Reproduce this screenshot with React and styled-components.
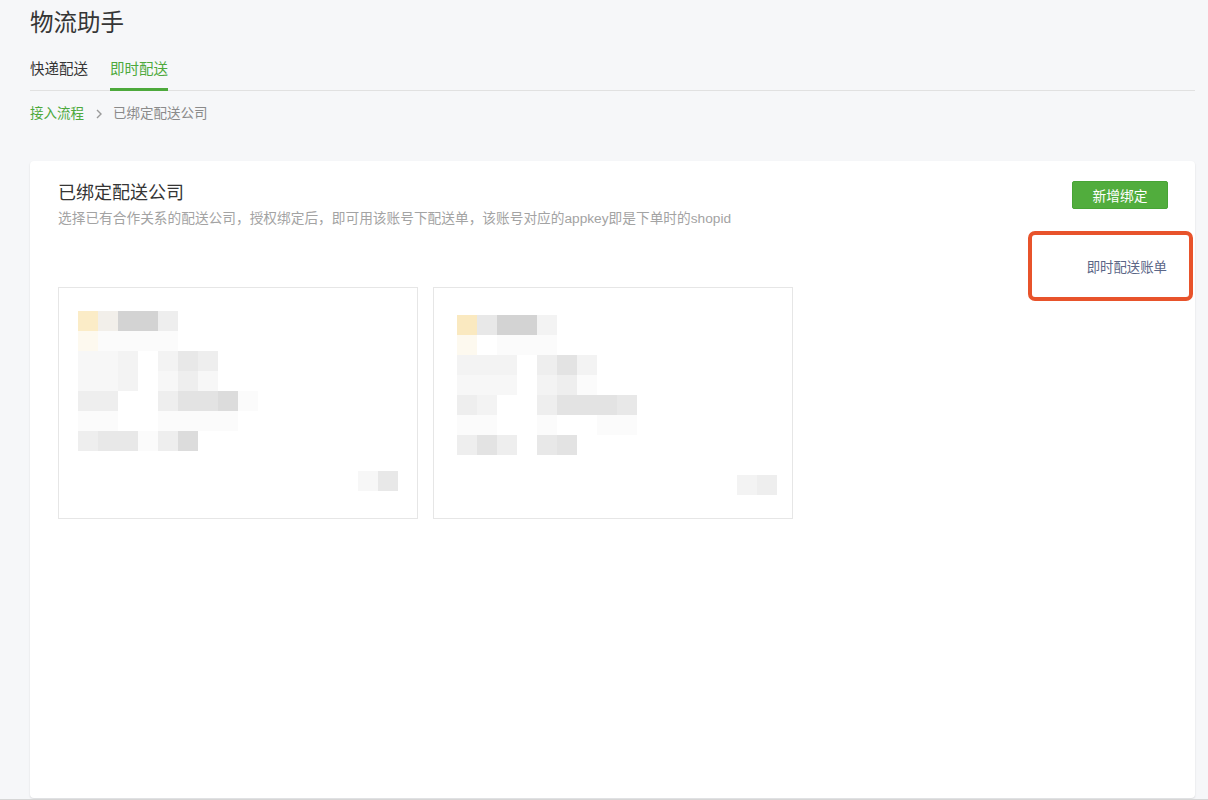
import React from "react";
import styled, { createGlobalStyle } from "styled-components";

const GlobalStyle = createGlobalStyle`
  html, body {
    margin: 0;
    padding: 0;
    background: #f6f7f9;
    font-family: "Liberation Sans", "Noto Sans CJK SC", sans-serif;
    color: #353535;
  }
`;

// mosaic palette for the blurred card contents
const palette = {
  y: "#fbecc7",
  Y: "#fae9c0",
  w: "#fdf9ef",
  a: "#f2efea",
  D: "#d3d3d3",
  d: "#dcdcdc",
  c: "#e3e3e3",
  b: "#e8e8e8",
  e: "#eeeeee",
  f: "#f3f3f3",
  g: "#f7f7f7",
  h: "#fbfbfb",
};

const cards = [
  {
    id: 1,
    top: 23,
    left: 19,
    rows: [
      "yaDDe",
      "whhhh",
      "ggf.fbe",
      "ggf.geg",
      "ee..eccdh",
      "hh..hhhh",
      "ebbhed",
      "",
      "..............gb",
    ],
  },
  {
    id: 2,
    top: 27,
    left: 23,
    rows: [
      "YbDDf",
      "w.hhh",
      "fff.ecf",
      "ggg.feh",
      "ef..ecccb",
      "hh..h..hh",
      "ece.bc",
      "",
      "..............fe",
    ],
  },
];

const App = () => {
  return (
    <>
      <GlobalStyle />
      <Page>
        <PageTitle>物流助手</PageTitle>
        <Tabs>
          <Tab>快递配送</Tab>
          <Tab active>即时配送</Tab>
        </Tabs>
        <Breadcrumb>
          <Crumb link>接入流程</Crumb>
          <Chevron viewBox="0 0 8 12">
            <path d="M2 2l4 4-4 4" fill="none" stroke="#9a9a9a" strokeWidth="1.4" />
          </Chevron>
          <Crumb>已绑定配送公司</Crumb>
        </Breadcrumb>

        <Panel>
          <PanelHeader>
            <div>
              <PanelTitle>已绑定配送公司</PanelTitle>
              <PanelDesc>
                选择已有合作关系的配送公司，授权绑定后，即可用该账号下配送单，该账号对应的appkey即是下单时的shopid
              </PanelDesc>
            </div>
            <PrimaryButton>新增绑定</PrimaryButton>
          </PanelHeader>

          <LinkRow>
            <BillLink>即时配送账单</BillLink>
          </LinkRow>

          <CardRow>
            {cards.map((card) => (
              <Card key={card.id}>
                <Mosaic top={card.top} left={card.left}>
                  {card.rows.map((row, r) => (
                    <MosaicRow key={r}>
                      {row.split("").map((ch, i) => (
                        <Cell key={i} color={palette[ch] || "transparent"} />
                      ))}
                    </MosaicRow>
                  ))}
                </Mosaic>
              </Card>
            ))}
          </CardRow>
        </Panel>
        <BottomLine />
      </Page>
    </>
  );
};

const Page = styled.div`
  padding: 0 13px 0 30px;
  height: 800px;
  box-sizing: border-box;
  display: flex;
  flex-direction: column;
  position: relative;
  overflow: hidden;
`;

const PageTitle = styled.h1`
  margin: 7px 0 0;
  font-size: 23.5px;
  line-height: 32px;
  font-weight: normal;
  color: #353535;
`;

const Tabs = styled.div`
  display: flex;
  gap: 22px;
  margin-top: 13px;
  border-bottom: 1px solid #e1e1e1;
`;

const Tab = styled.div`
  font-size: 14.5px;
  line-height: 22px;
  padding: 6px 0 8px;
  margin-bottom: -1px;
  color: ${(p) => (p.active ? "#4da93c" : "#353535")};
  border-bottom: 3px solid ${(p) => (p.active ? "#4da93c" : "transparent")};
`;

const Breadcrumb = styled.div`
  display: flex;
  align-items: center;
  gap: 9px;
  margin-top: 13px;
  font-size: 13.5px;
  line-height: 20px;
`;

const Crumb = styled.span`
  color: ${(p) => (p.link ? "#4da93c" : "#8a8a8a")};
`;

const Chevron = styled.svg`
  width: 8px;
  height: 12px;
  margin: 0 1px 0 2px;
`;

const Panel = styled.div`
  margin-top: 37px;
  height: 637px;
  box-sizing: border-box;
  background: #ffffff;
  border-radius: 4px;
  box-shadow: 0 1px 2px rgba(0, 0, 0, 0.12);
  padding: 19px 27px 0 28px;
`;

const PanelHeader = styled.div`
  display: flex;
  justify-content: space-between;
  align-items: flex-start;
`;

const PanelTitle = styled.h2`
  margin: 0;
  font-size: 18px;
  line-height: 26px;
  font-weight: normal;
  color: #353535;
`;

const PanelDesc = styled.p`
  margin: 3px 0 0;
  font-size: 13.7px;
  line-height: 20px;
  color: #a3a3a3;
`;

const PrimaryButton = styled.button`
  margin-top: 1px;
  width: 96px;
  height: 28px;
  border: 1px solid #47a435;
  border-radius: 2px;
  background: #51ad3d;
  color: #ffffff;
  font-family: inherit;
  font-size: 13.75px;
  cursor: pointer;
`;

const LinkRow = styled.div`
  display: flex;
  justify-content: flex-end;
  margin-top: 29px;
  padding-right: 1px;
`;

const BillLink = styled.a`
  position: relative;
  font-size: 13.4px;
  line-height: 20px;
  color: #5b6687;
  cursor: pointer;
  &::after {
    content: "";
    position: absolute;
    top: -27px;
    bottom: -23px;
    left: -59px;
    right: -26px;
    border: 4px solid #e8532b;
    border-radius: 7px;
  }
`;

const CardRow = styled.div`
  display: flex;
  gap: 15px;
  margin-top: 9px;
`;

const Card = styled.div`
  width: 360px;
  height: 232px;
  box-sizing: border-box;
  border: 1px solid #e6e6e6;
  background: #ffffff;
`;

const Mosaic = styled.div`
  padding: ${(p) => p.top}px 0 0 ${(p) => p.left}px;
  display: flex;
  flex-direction: column;
`;

const MosaicRow = styled.div`
  display: flex;
  height: 20px;
`;

const Cell = styled.div`
  width: 20px;
  height: 20px;
  background: ${(p) => p.color};
`;

const BottomLine = styled.div`
  position: absolute;
  left: 0;
  right: 0;
  bottom: 0;
  height: 1px;
  background: #d6d6d6;
`;

export default App;
